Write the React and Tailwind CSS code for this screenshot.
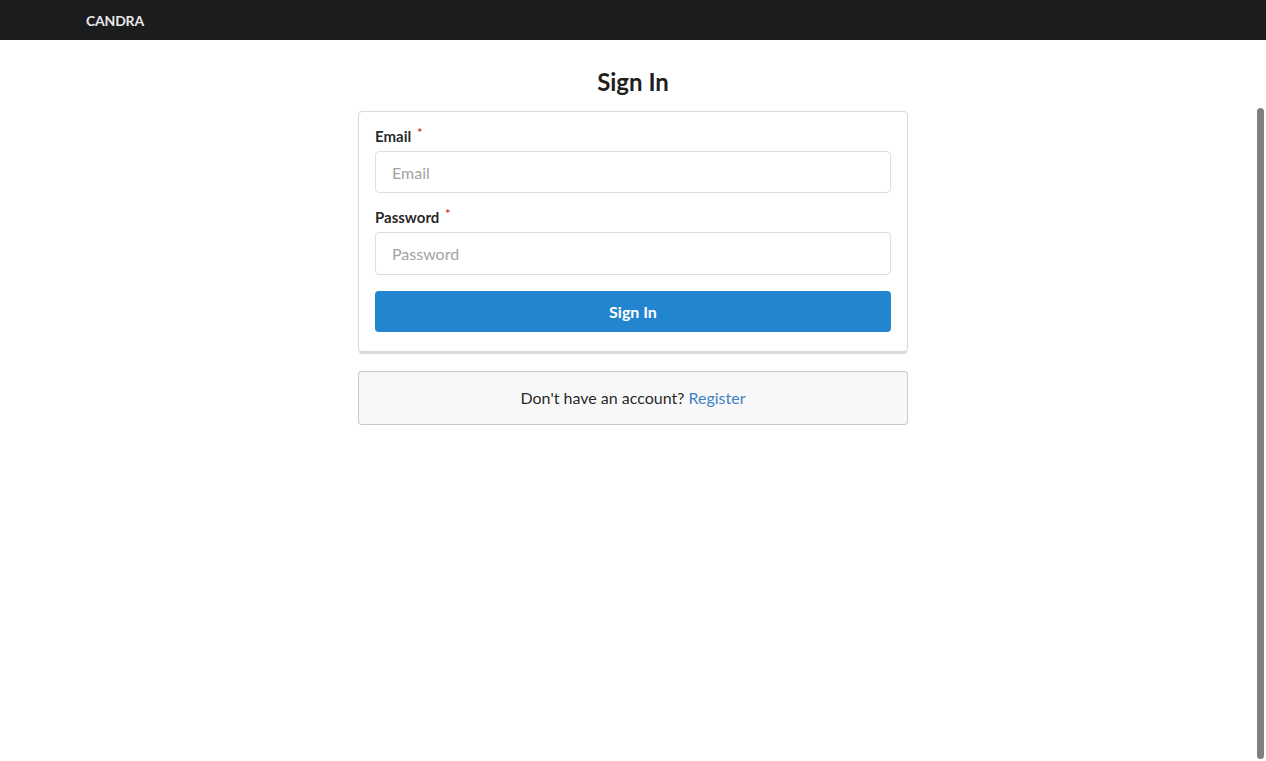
import React, { useState } from 'react';

const RequiredLabel = ({ htmlFor, children }) => (
  <label htmlFor={htmlFor} className="block mb-[4px] text-[15px] leading-[18px] font-bold text-[rgba(0,0,0,0.87)]">
    {children}
    <span className="relative -top-[5px] ml-[6px] text-[12px] text-[#db2828]">*</span>
  </label>
);

const App = () => {
  const [email, setEmail] = useState('');
  const [password, setPassword] = useState('');

  return (
    <div className="min-h-screen bg-white font-['Lato','Helvetica_Neue',Arial,sans-serif]">
      {/* top menu */}
      <div className="h-10 bg-[#1b1c1d] flex items-center">
        <div className="pl-[86px] text-[14px] font-bold text-[#e8e8e8] tracking-[-0.2px]">CANDRA</div>
      </div>

      <div className="w-[550px] mx-auto pt-[26px]">
        <h2 className="text-center text-[24px] leading-[31px] font-bold text-[#1f1f1f] mb-[14px]">Sign In</h2>

        <form
          className="bg-white border border-[#d9d9da] rounded-[4px] shadow-[0_3px_1px_-1px_rgba(34,36,38,0.18)] px-4 pt-[15px] pb-[19px]"
          onSubmit={(e) => e.preventDefault()}
        >
          <div className="mb-[15px]">
            <RequiredLabel htmlFor="email">Email</RequiredLabel>
            <input
              id="email"
              type="email"
              value={email}
              onChange={(e) => setEmail(e.target.value)}
              placeholder="Email"
              className="w-full h-[42px] px-4 border border-[rgba(34,36,38,0.15)] rounded-[4px] text-[16px] text-[rgba(0,0,0,0.87)] placeholder:text-[#a3a3a3] outline-none"
            />
          </div>
          <div className="mb-[16px]">
            <RequiredLabel htmlFor="password">Password</RequiredLabel>
            <input
              id="password"
              type="password"
              value={password}
              onChange={(e) => setPassword(e.target.value)}
              placeholder="Password"
              className="w-full h-[43px] px-4 border border-[rgba(34,36,38,0.15)] rounded-[4px] text-[16px] text-[rgba(0,0,0,0.87)] placeholder:text-[#a3a3a3] outline-none"
            />
          </div>
          <button
            type="submit"
            className="w-full h-[41px] bg-[#2185d0] rounded-[4px] text-white text-[16px] font-bold"
          >
            Sign In
          </button>
        </form>

        <div className="mt-[19px] h-[54px] flex items-center justify-center bg-[#f8f8f9] border border-[rgba(34,36,38,0.22)] rounded-[4px] text-[16px] text-[rgba(0,0,0,0.87)]">
          Don't have an account?&nbsp;<a href="#" className="text-[#4183c4]">Register</a>
        </div>
      </div>

      {/* overlay scrollbar thumb */}
      <div className="fixed left-[1257px] top-[108px] w-[7px] h-[651px] rounded-full bg-[#7f7f7f]" />
    </div>
  );
};

export default App;
